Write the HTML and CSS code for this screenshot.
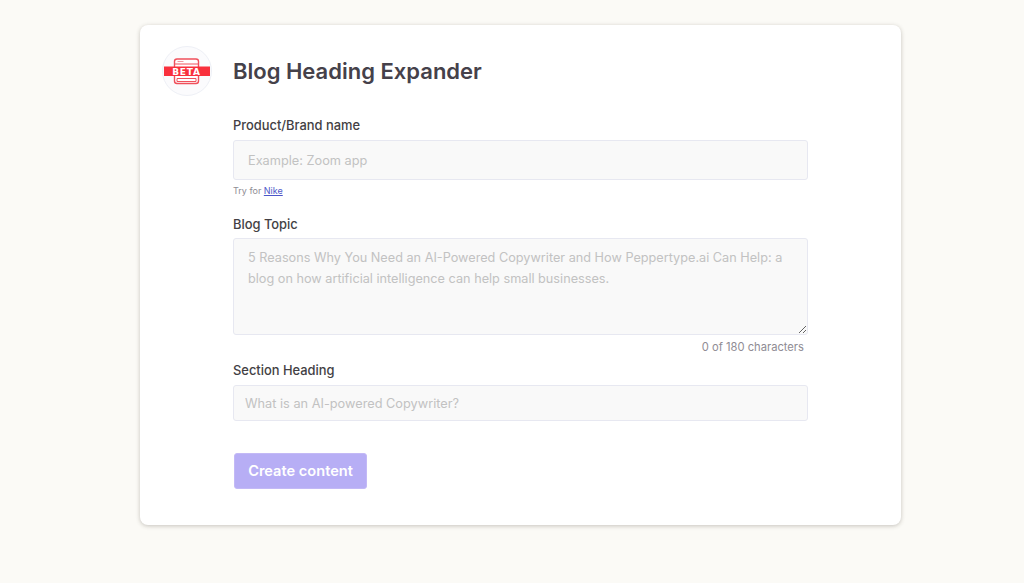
FILE: index.html
```html
<!DOCTYPE html>
<html lang="en">
<head>
<meta charset="utf-8">
<title>Blog Heading Expander</title>
<link rel="stylesheet" href="styles.css">
</head>
<body>
<main class="card">
  <div class="logo">
    <svg class="logo-svg" viewBox="0 0 48 48" width="48" height="48" aria-hidden="true">
      <rect x="11.5" y="12" width="24" height="24.5" rx="2.5" fill="#fff" stroke="#f0505c" stroke-width="1.4"/>
      <path d="M12 17h23" stroke="#f0505c" stroke-width="1"/>
      <path d="M14.5 14.5h6" stroke="#f09aa2" stroke-width="1"/>
      <path d="M14 31.5h19v3H14z" fill="none" stroke="#f0505c" stroke-width="1"/>
      <rect x="1" y="19.5" width="46" height="9.5" fill="#f9303d"/>
      <text x="23.5" y="28" class="beta" text-anchor="middle">BETA</text>
    </svg>
  </div>
  <div class="content">
    <h1 class="title">Blog Heading Expander</h1>
    <form class="form">
      <label class="label" for="brand">Product/Brand name</label>
      <input class="field field-lg" id="brand" placeholder="Example: Zoom app">
      <p class="hint">Try for <a href="#">Nike</a></p>
      <label class="label label-topic" for="topic">Blog Topic</label>
      <textarea class="field area" id="topic" placeholder="5 Reasons Why You Need an AI-Powered Copywriter and How Peppertype.ai Can Help: a blog on how artificial intelligence can help small businesses."></textarea>
      <p class="count">0 of 180 characters</p>
      <label class="label label-section" for="heading">Section Heading</label>
      <input class="field field-sm" id="heading" placeholder="What is an AI-powered Copywriter?">
      <button class="submit" type="button">Create content</button>
    </form>
  </div>
</main>
</body>
</html>
```
FILE: styles.css
```css
* { box-sizing: border-box; }
html, body { height: 100%; }
body {
  margin: 0;
  background: #fbfaf6;
  font-family: Inter, "Liberation Sans", sans-serif;
  color: #3f3b3f;
  overflow: hidden;
}
.card {
  width: 761px;
  height: 500px;
  margin: 25px 0 0 140px;
  padding: 21px 93px 0 22px;
  display: flex;
  gap: 21px;
  background: #fff;
  border-radius: 8px;
  box-shadow: 0 1px 4px rgba(60, 55, 40, 0.28);
}
.logo {
  flex: none;
  width: 50px;
  height: 50px;
  border: 1px solid #eef0f6;
  border-radius: 50%;
  background: #fbfbfd;
}
.logo-svg { display: block; }
.beta {
  font-family: "DejaVu Sans", sans-serif;
  font-size: 9px;
  font-weight: 700;
  letter-spacing: 0.8px;
  fill: #fff;
}
.content { flex: 1; min-width: 0; }
.title {
  margin: 11px 0 0;
  font-size: 22px;
  line-height: 28px;
  font-weight: 600;
  color: #45414a;
}
.form { display: flex; flex-direction: column; align-items: flex-start; margin-top: 32px; }
.label {
  font-size: 12.9px;
  line-height: 18px;
  font-weight: 500;
  color: #433f44;
}
.field {
  width: 575px;
  display: block;
  background: #f9f9f9;
  border: 1px solid #e7e8f1;
  border-radius: 3px;
  font-family: Inter, "Liberation Sans", sans-serif;
  color: #3f3b3f;
  outline: none;
}
.field::placeholder { color: #c2c2c2; opacity: 1; }
.field-lg {
  height: 40px;
  margin-top: 5px;
  padding: 0 14px;
  font-size: 12.75px;
}
.hint {
  margin: 5px 0 0;
  font-size: 9px;
  line-height: 12px;
  color: #8f8c94;
}
.hint a { color: #4c56c8; }
.label-topic { margin-top: 19px; }
.area {
  height: 97px;
  margin-top: 4px;
  padding: 8px 14px;
  font-size: 12.7px;
  line-height: 21px;
  resize: vertical;
}
.count {
  width: 575px;
  margin: 4px 0 0;
  padding-right: 4px;
  text-align: right;
  font-size: 11.2px;
  line-height: 16px;
  color: #8f8c94;
}
.label-section { margin-top: 7px; }
.field-sm {
  height: 36px;
  margin-top: 5px;
  padding: 0 11px;
  font-size: 12.75px;
}
.submit {
  width: 133px;
  height: 36px;
  margin-top: 32px;
  margin-left: 1px;
  border: 1px solid #c3b9f6;
  border-radius: 3px;
  background: #b7aef5;
  color: #fff;
  font-family: Inter, "Liberation Sans", sans-serif;
  font-size: 14.6px;
  font-weight: 600;
}
```
